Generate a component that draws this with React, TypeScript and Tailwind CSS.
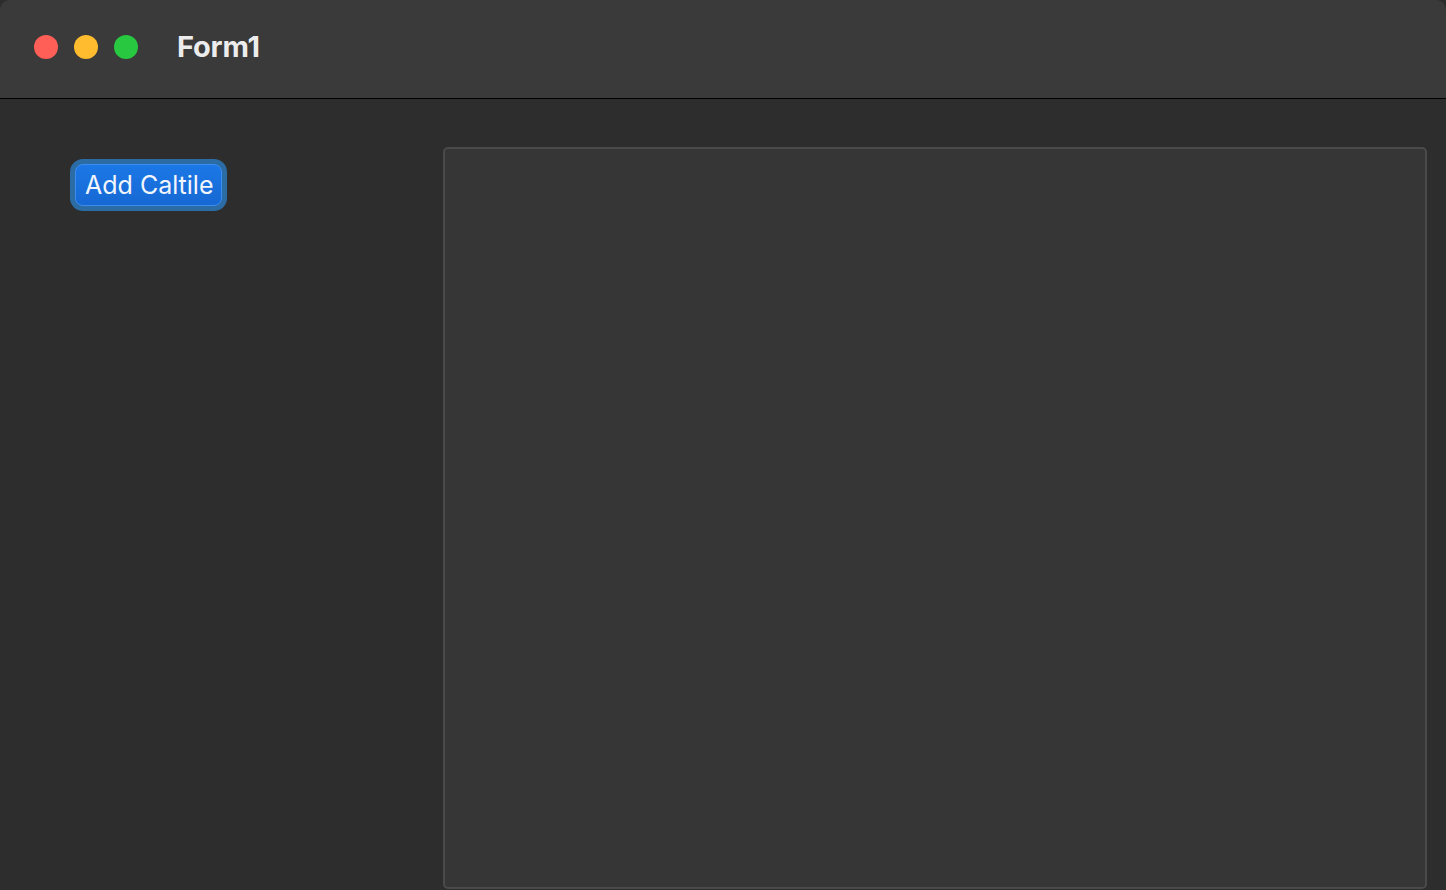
export default function App() {
  return (
    <div
      className="flex h-[890px] w-[1446px] flex-col overflow-hidden bg-[#2d2d2d]"
      style={{ fontFamily: "Inter, 'Liberation Sans', sans-serif" }}
    >
      {/* Title bar */}
      <div className="flex h-[99px] shrink-0 items-center rounded-t-[10px] border-b border-black bg-[#3a3a3a] pb-[5px] pl-[34px]">
        <div className="flex gap-[16px]">
          <span className="h-[24px] w-[24px] rounded-full bg-[#ff5f57]" />
          <span className="h-[24px] w-[24px] rounded-full bg-[#febc2e]" />
          <span className="h-[24px] w-[24px] rounded-full bg-[#28c840]" />
        </div>
        <span className="ml-[39px] text-[29px] font-bold tracking-[-0.2px] text-[#ececec]">Form1</span>
      </div>

      {/* Content */}
      <div className="flex flex-1 pt-[48px]">
        <div className="w-[443px] shrink-0 pl-[70px] pt-[12px]">
          <div className="inline-flex rounded-[13px] bg-[#2c6ca4] p-[5px]">
            <button className="flex h-[42px] w-[147px] items-center rounded-[8px] border border-[#3d8cf0] bg-gradient-to-b from-[#1b78e6] to-[#1668d4] pl-[9px] text-[25px] leading-none text-[#f2f6fb]">
              <span className="block w-[128px] overflow-hidden whitespace-nowrap text-left">Add Caltile</span>
            </button>
          </div>
        </div>
        <div className="mb-[1px] mr-[19px] flex-1 rounded-[5px] border-2 border-[#4a4a4a] bg-[#363636]" />
      </div>
    </div>
  );
}
